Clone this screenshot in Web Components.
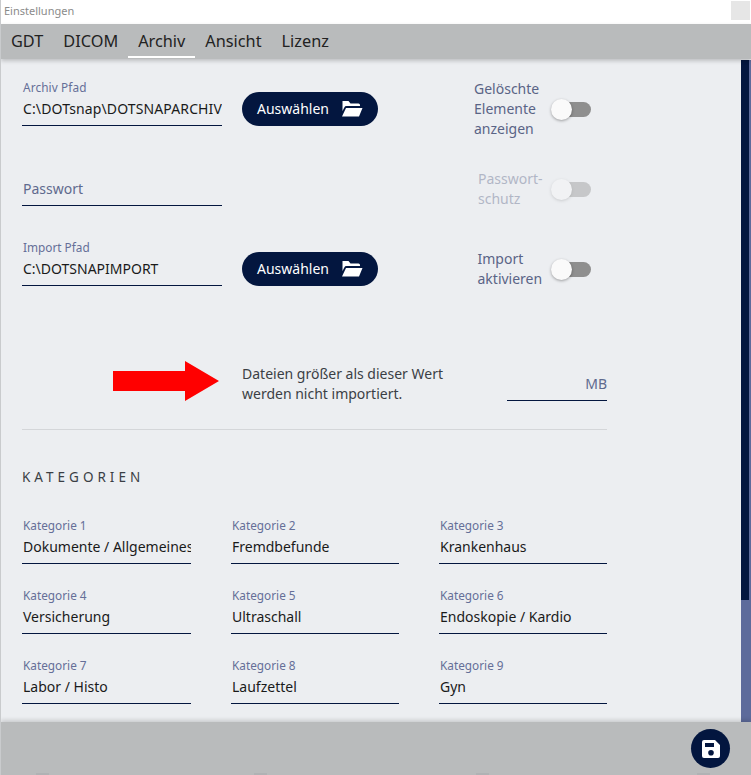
<!DOCTYPE html>
<html lang="de">
<head>
<meta charset="utf-8">
<title>Einstellungen</title>
<style>
  html, body { margin: 0; padding: 0; height: 100%; overflow: hidden; }
  body { font-family: "Noto Sans", "Open Sans", sans-serif; background: #eceef1; }
</style>
</head>
<body>
<settings-window>
  <tab-bar slot="tabs" active="Archiv"></tab-bar>

  <settings-row top="14">
    <text-field slot="field" label="Archiv Pfad" value="C:\DOTsnap\DOTSNAPARCHIV" style="letter-spacing:.12px"></text-field>
    <pick-button slot="action">Auswählen</pick-button>
    <toggle-switch slot="toggle" indent="0">Gelöschte<br>Elemente<br>anzeigen</toggle-switch>
  </settings-row>
  <settings-row>
    <text-field slot="field" placeholder="Passwort"></text-field>
    <toggle-switch slot="toggle" indent="4" disabled>Passwort-<br>schutz</toggle-switch>
  </settings-row>
  <settings-row>
    <text-field slot="field" label="Import Pfad" value="C:\DOTSNAPIMPORT"></text-field>
    <pick-button slot="action">Auswählen</pick-button>
    <toggle-switch slot="toggle" indent="3.5">Import<br>aktivieren</toggle-switch>
  </settings-row>

  <size-limit></size-limit>

  <section-title>KATEGORIEN</section-title>
  <category-grid>
    <text-field label="Kategorie 1" value="Dokumente / Allgemeines"></text-field>
    <text-field label="Kategorie 2" value="Fremdbefunde"></text-field>
    <text-field label="Kategorie 3" value="Krankenhaus"></text-field>
    <text-field label="Kategorie 4" value="Versicherung"></text-field>
    <text-field label="Kategorie 5" value="Ultraschall"></text-field>
    <text-field label="Kategorie 6" value="Endoskopie / Kardio"></text-field>
    <text-field label="Kategorie 7" value="Labor / Histo"></text-field>
    <text-field label="Kategorie 8" value="Laufzettel"></text-field>
    <text-field label="Kategorie 9" value="Gyn"></text-field>
  </category-grid>
</settings-window>

<script>
class SettingsWindow extends HTMLElement {
  constructor() {
    super();
    this.attachShadow({ mode: "open" });
    this.shadowRoot.innerHTML = `
      <style>
        :host { display: flex; flex-direction: column; width: 751px; height: 775px; overflow: hidden;
                background: #eceef1; box-sizing: border-box; border-left: 1px solid #c9cbcd; }
        .title { flex: 0 0 24px; display: flex; justify-content: space-between; background: #fff;
                 font-size: 11px; line-height: 22px; color: #8b8b8b; padding-left: 3px; }
        .close { width: 19px; height: 19px; margin: 1px 1px 0 0; background: #e6e6e6; }
        .body { flex: 1; display: flex; min-height: 0; }
        .content { flex: 1; min-width: 0; padding-left: 21px; }
        .scroll { flex: 0 0 10px; margin-top: 1px; background: #5d6b9b; }
        .thumb { height: 540px; margin-right: 2px; background: #03163f; }
        /* restos desfocados dos icones que ficam atras do rodape */
        .footer { position: relative; flex: 0 0 53px; display: flex; justify-content: flex-end; align-items: flex-start;
                  background: #b9bbbc; padding: 7px 21px 0 0; box-sizing: border-box;
                  box-shadow: 0 -2px 4px rgba(0,0,0,.15); }
        .fab { width: 39px; height: 39px; border-radius: 50%; background: #03163f;
               display: flex; align-items: center; justify-content: center; }
        .ghost { position: absolute; bottom: 0; width: 13px; height: 2px; background: rgba(150,152,154,.25); }
      </style>
      <div class="title"><span>Einstellungen</span><span class="close"></span></div>
      <slot name="tabs"></slot>
      <div class="body">
        <div class="content"><slot></slot></div>
        <div class="scroll"><div class="thumb"></div></div>
      </div>
      <div class="footer">
        <span class="ghost" style="left:35px"></span>
        <span class="ghost" style="left:253px"></span>
        <span class="ghost" style="left:475px"></span>
        <span class="ghost" style="left:696px"></span>
        <div class="fab">
          <svg width="18" height="18" viewBox="0 0 18 18"><path fill="#fff" d="M2 0h11l5 5v11a2 2 0 0 1-2 2H2a2 2 0 0 1-2-2V2a2 2 0 0 1 2-2zm1 3v4h9V3H3zm6 7a2.8 2.8 0 1 0 0 5.600a2.800 2.800 0 0 0 0-5.600z"/></svg>
        </div>
      </div>`;
  }
}

class TabBar extends HTMLElement {
  constructor() {
    super();
    this.attachShadow({ mode: "open" });
    const active = this.getAttribute("active");
    const tabs = ["GDT", "DICOM", "Archiv", "Ansicht", "Lizenz"];
    this.shadowRoot.innerHTML = `
      <style>
        :host { display: flex; flex: 0 0 35px; box-sizing: border-box; position: relative; z-index: 1;
                background: #b9bbbc; box-shadow: 0 2px 4px rgba(0,0,0,.2); }
        .tab { padding: 0 10px; font-size: 16.300px; line-height: 34px; color: #222; height: 34px; box-sizing: border-box; }
        .tab.on { border-bottom: 2px solid #fff; }
      </style>
      ${tabs.map(t => `<div class="tab ${t === active ? "on" : ""}">${t}</div>`).join("")}`;
  }
}

class SettingsRow extends HTMLElement {
  constructor() {
    super();
    this.attachShadow({ mode: "open" });
    const top = this.getAttribute("top") || 0;
    this.shadowRoot.innerHTML = `
      <style>
        :host { display: grid; grid-template-columns: 200px 212px 1fr; column-gap: 20px;
                height: 80px; margin-top: ${top}px; align-items: start; }
      </style>
      <slot name="field"></slot>
      <div><slot name="action"></slot></div>
      <slot name="toggle"></slot>`;
  }
}

class TextField extends HTMLElement {
  constructor() {
    super();
    this.attachShadow({ mode: "open" });
    const label = this.getAttribute("label");
    const value = this.getAttribute("value");
    const placeholder = this.getAttribute("placeholder");
    this.shadowRoot.innerHTML = `
      <style>
        :host { display: block; box-sizing: border-box; height: 53px; padding-top: 6px; border-bottom: 1px solid #03163f; }
        .label { font-size: 11.800px; line-height: 16px; height: 16px; color: #656f98; padding-left: 1px; }
        .value { font-size: 14px; line-height: 22px; margin-top: 3px; color: #1a1a1a; padding-left: 1px; white-space: nowrap; overflow: hidden; }
        .ph { color: #5f6a8e; }
      </style>
      <div class="label">${label || "&nbsp;"}</div>
      <div class="value ${placeholder ? "ph" : ""}">${value || placeholder}</div>`;
  }
}

class PickButton extends HTMLElement {
  constructor() {
    super();
    this.attachShadow({ mode: "open" });
    this.shadowRoot.innerHTML = `
      <style>
        :host { display: flex; align-items: center; box-sizing: border-box; width: 136px; height: 34px; margin-top: 19px;
                padding: 0 15px 2px; justify-content: space-between; border-radius: 17px; background: #03163f;
                color: #fff; font-size: 14px; }
        svg { margin-top: 2px; }
      </style>
      <slot></slot>
      <svg width="22" height="18" viewBox="0 0 22 18"><path fill="#fff" d="M1.500 1h6l2 2.500h8a1.500 1.500 0 0 1 1.500 1.500v1H5.500a2.500 2.500 0 0 0-2.200 1.400L1.500 11V2zM5 8h16.500l-3.500 8.500H1z"/></svg>`;
  }
}

class ToggleSwitch extends HTMLElement {
  constructor() {
    super();
    this.attachShadow({ mode: "open" });
    const indent = this.getAttribute("indent") || 0;
    this.shadowRoot.innerHTML = `
      <style>
        :host { display: flex; align-items: center; width: 117px; color: #5a6486; font-size: 14px; line-height: 20px;
                margin-top: 6px; box-sizing: border-box; min-height: 60px; }
        :host([disabled]) { opacity: .4; }
        .text { width: 77px; padding-left: ${indent}px; box-sizing: border-box; }
        .track { width: 30px; height: 15px; border-radius: 8px; background: #8f8f8f; position: relative; margin-left: 10px; }
        .knob { position: absolute; left: -10px; top: -3px; width: 21px; height: 21px; border-radius: 50%;
                background: #fafafa; box-shadow: 0 1px 3px rgba(0,0,0,.35); }
      </style>
      <div class="text"><slot></slot></div>
      <div class="track"><div class="knob"></div></div>`;
  }
}

class SizeLimit extends HTMLElement {
  constructor() {
    super();
    this.attachShadow({ mode: "open" });
    this.shadowRoot.innerHTML = `
      <style>
        :host { display: block; width: 585px; border-bottom: 1px solid #d4d6d9; padding-bottom: 28px; margin-top: 48px; }
        .row { display: flex; align-items: center; height: 40px; }
        svg { margin-left: 91px; flex: none; }
        .text { margin-left: 23px; width: 265px; padding: 5px 35px 0 0; box-sizing: border-box; font-size: 14px; line-height: 20px; color: #3b3f45; }
        .mb { flex: 1; height: 100%; box-sizing: border-box; border-bottom: 1px solid #03163f; font-size: 14px; line-height: 30px; padding-top: 8px; text-align: right; color: #5f6a8e; }
      </style>
      <div class="row">
        <svg width="106" height="40" viewBox="0 0 106 40"><path fill="#f00" d="M0 10h72V0l34 20-34 20V30H0z"/></svg>
        <div class="text">Dateien größer als dieser Wert werden nicht importiert.</div>
        <div class="mb">MB</div>
      </div>`;
  }
}

class SectionTitle extends HTMLElement {
  constructor() {
    super();
    this.attachShadow({ mode: "open" });
    this.shadowRoot.innerHTML = `
      <style>
        :host { display: block; margin-top: 38px; font-size: 13.500px; line-height: 18px; letter-spacing: 4px; color: #3b3f45; }
      </style>
      <slot></slot>`;
  }
}

class CategoryGrid extends HTMLElement {
  constructor() {
    super();
    this.attachShadow({ mode: "open" });
    this.shadowRoot.innerHTML = `
      <style>
        :host { display: grid; width: 585px; grid-template-columns: 169px 168px 168px; justify-content: space-between;
                row-gap: 17px; margin-top: 25px; }
      </style>
      <slot></slot>`;
  }
}

customElements.define("settings-window", SettingsWindow);
customElements.define("tab-bar", TabBar);
customElements.define("settings-row", SettingsRow);
customElements.define("text-field", TextField);
customElements.define("pick-button", PickButton);
customElements.define("toggle-switch", ToggleSwitch);
customElements.define("size-limit", SizeLimit);
customElements.define("section-title", SectionTitle);
customElements.define("category-grid", CategoryGrid);
</script>
</body>
</html>
